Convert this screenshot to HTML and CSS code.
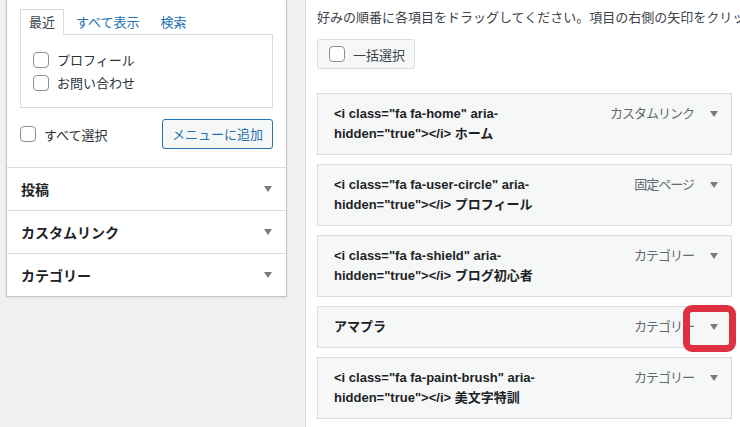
FILE: index.html
```html
<!DOCTYPE html>
<html lang="ja">
<head>
<meta charset="utf-8">
<title>メニュー</title>
<link rel="stylesheet" href="styles.css">
</head>
<body>
<div class="layout">
  <aside class="sidebar">
    <div class="pages-box">
      <div class="tabs">
        <span class="tab active">最近</span>
        <span class="tab">すべて表示</span>
        <span class="tab">検索</span>
      </div>
      <div class="tab-panel">
        <label class="check-row"><input type="checkbox" class="cb"><span>プロフィール</span></label>
        <label class="check-row"><input type="checkbox" class="cb"><span>お問い合わせ</span></label>
      </div>
      <div class="select-row">
        <label class="check-row all"><input type="checkbox" class="cb"><span>すべて選択</span></label>
        <button class="add-btn">メニューに追加</button>
      </div>
    </div>
    <div class="acc-row"><span>投稿</span><i class="tri"></i></div>
    <div class="acc-row"><span>カスタムリンク</span><i class="tri"></i></div>
    <div class="acc-row"><span>カテゴリー</span><i class="tri"></i></div>
  </aside>

  <main class="content">
    <p class="intro">好みの順番に各項目をドラッグしてください。項目の右側の矢印をクリック</p>
    <div class="bulk"><input type="checkbox" class="cb"><span>一括選択</span></div>
    <ul class="menu-items">
      <li class="item">
        <span class="title">&lt;i class="fa fa-home" aria-hidden="true"&gt;&lt;/i&gt; ホーム</span>
        <span class="controls"><span class="type">カスタムリンク</span><i class="tri"></i></span>
      </li>
      <li class="item">
        <span class="title">&lt;i class="fa fa-user-circle" aria-hidden="true"&gt;&lt;/i&gt; プロフィール</span>
        <span class="controls"><span class="type">固定ページ</span><i class="tri"></i></span>
      </li>
      <li class="item">
        <span class="title">&lt;i class="fa fa-shield" aria-hidden="true"&gt;&lt;/i&gt; ブログ初心者</span>
        <span class="controls"><span class="type">カテゴリー</span><i class="tri"></i></span>
      </li>
      <li class="item highlighted">
        <span class="title">アマプラ</span>
        <span class="controls"><span class="type">カテゴリー</span><i class="tri"></i></span>
        <span class="marker"></span>
      </li>
      <li class="item">
        <span class="title">&lt;i class="fa fa-paint-brush" aria-hidden="true"&gt;&lt;/i&gt; 美文字特訓</span>
        <span class="controls"><span class="type">カテゴリー</span><i class="tri"></i></span>
      </li>
    </ul>
  </main>
</div>
</body>
</html>
```

FILE: styles.css
```css
* { box-sizing: border-box; }

html, body {
  margin: 0;
  padding: 0;
}

body {
  width: 740px;
  height: 427px;
  overflow: hidden;
  background: #f0f0f0;
  font-family: "Liberation Sans", "Noto Sans CJK JP", sans-serif;
  font-size: 13px;
  color: #2c3338;
}

.layout {
  display: flex;
  align-items: flex-start;
  padding-left: 6px;
}

/* ---------- sidebar ---------- */
.sidebar {
  width: 281px;
  flex: none;
  background: #fff;
  border: 1px solid #c3c4c7;
  border-top: none;
  box-shadow: 0 1px 2px rgba(0, 0, 0, 0.08);
}

.pages-box {
  padding: 9px 13px 18px;
}

.tabs {
  display: flex;
  height: 25px;
  align-items: stretch;
  gap: 3px;
}

.tab {
  display: flex;
  align-items: center;
  padding: 0 8px;
  color: #2271b1;
  line-height: 1;
  border: 1px solid transparent;
  border-bottom: none;
}

.tab.active {
  color: #3c434a;
  background: #fff;
  border-color: #dcdcde;
  position: relative;
  z-index: 1;
  margin-bottom: -1px;
}

.tab-panel {
  border: 1px solid #dcdcde;
  height: 74px;
  padding: 13px 12px;
}

.check-row {
  display: flex;
  align-items: center;
  height: 23px;
  gap: 8px;
  color: #2c3338;
}

.cb {
  appearance: none;
  -webkit-appearance: none;
  margin: 0;
  width: 16px;
  height: 16px;
  flex: none;
  border: 1px solid #8c8f94;
  border-radius: 4px;
  background: #fff;
}

.select-row {
  margin-top: 11px;
  display: flex;
  align-items: center;
  justify-content: space-between;
}

.add-btn {
  width: 111px;
  height: 30px;
  padding: 0;
  border: 1px solid #2271b1;
  border-radius: 3px;
  background: #f6f7f7;
  color: #2271b1;
  font-family: inherit;
  font-size: 13px;
  line-height: 1;
}

.acc-row {
  height: 43px;
  border-top: 1px solid #dcdcde;
  display: flex;
  align-items: center;
  justify-content: space-between;
  padding: 0 14px;
  font-size: 14px;
  font-weight: bold;
  color: #1d2327;
}

.tri {
  display: block;
  width: 0;
  height: 0;
  border-left: 4px solid transparent;
  border-right: 4px solid transparent;
  border-top: 6px solid #787c82;
  flex: none;
}

/* ---------- content ---------- */
.content {
  flex: 1;
  min-width: 0;
  margin-left: 18px;
  min-height: 427px;
  background: #fff;
  border-left: 1px solid #dcdcde;
  padding: 8px 0 0 11px;
  overflow: hidden;
}

.intro {
  margin: 0;
  line-height: 20px;
  white-space: nowrap;
  color: #3c434a;
  width: 423px;
  overflow: hidden;
}

.bulk {
  margin-top: 11px;
  width: 98px;
  height: 30px;
  display: flex;
  align-items: center;
  gap: 8px;
  padding-left: 11px;
  background: #f6f7f7;
  border: 1px solid #dcdcde;
  border-radius: 3px;
  color: #3c434a;
}

.menu-items {
  list-style: none;
  margin: 24px 0 0;
  padding: 0;
  width: 415px;
}

.item {
  position: relative;
  display: flex;
  align-items: flex-start;
  background: #f6f7f7;
  border: 1px solid #dcdcde;
  padding: 10px 13px 10px 16px;
  margin-bottom: 9px;
  line-height: 20px;
}

.title {
  flex: 1;
  min-width: 0;
  max-width: 245px;
  margin-right: auto;
  font-weight: bold;
  color: #1d2327;
}

.controls {
  flex: none;
  display: flex;
  align-items: center;
  height: 20px;
  gap: 16px;
}

.type {
  color: #646970;
  letter-spacing: -1px;
}

.marker {
  position: absolute;
  left: 365px;
  top: -2px;
  width: 53px;
  height: 47px;
  border: 7px solid #dd3141;
  border-radius: 9px;
}
```
